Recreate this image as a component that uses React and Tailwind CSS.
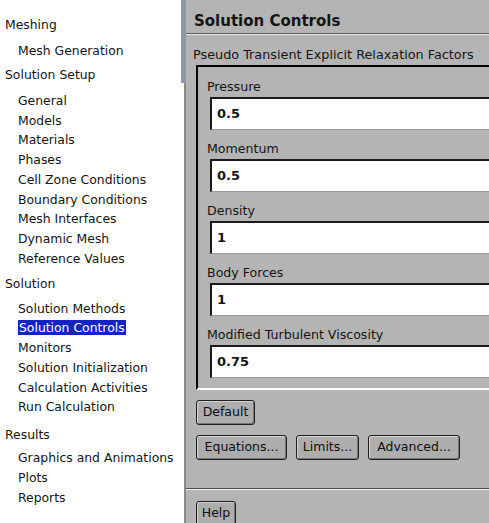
const tree = [
  { title: 'Meshing', sp: 'mb-[6px]', items: ['Mesh Generation'] },
  {
    title: 'Solution Setup',
    sp: 'mt-[4px] mb-[6px]',
    items: [
      'General',
      'Models',
      'Materials',
      'Phases',
      'Cell Zone Conditions',
      'Boundary Conditions',
      'Mesh Interfaces',
      'Dynamic Mesh',
      'Reference Values',
    ],
  },
  {
    title: 'Solution',
    sp: 'mt-[5px] mb-[5px]',
    items: [
      'Solution Methods',
      'Solution Controls',
      'Monitors',
      'Solution Initialization',
      'Calculation Activities',
      'Run Calculation',
    ],
  },
  { title: 'Results', sp: 'mt-[8px] mb-[3px]', items: ['Graphics and Animations', 'Plots', 'Reports'] },
];

const fields = [
  { label: 'Pressure', value: '0.5' },
  { label: 'Momentum', value: '0.5' },
  { label: 'Density', value: '1' },
  { label: 'Body Forces', value: '1' },
  { label: 'Modified Turbulent Viscosity', value: '0.75' },
];

function Btn({ children, w }) {
  return (
    <button
      className={`h-[25px] ${w} rounded-[3px] border-[1.5px] border-[#1e1e1e] bg-[#adadad] text-[12.5px] leading-none text-[#0e0e0e] shadow-[inset_1px_1px_0_#d2d2d2,inset_-1px_-1px_0_#767676]`}
    >
      {children}
    </button>
  );
}

export default function App() {
  return (
    <div className="flex h-[523px] w-[489px] overflow-hidden bg-white font-['DejaVu_Sans',sans-serif] text-[#141414]">
      {/* arbre de navigation */}
      <div className="w-[181px] shrink-0 bg-white pt-[15px] text-[12.4px]">
        {tree.map((sec) => (
          <div key={sec.title}>
            <div className={`h-[20px] whitespace-nowrap pl-[5px] leading-[20px] ${sec.sp}`}>
              {sec.title}
            </div>
            {sec.items.map((it) => (
              <div key={it} className="h-[19.75px] whitespace-nowrap pl-[18px] leading-[19.75px]">
                {it === 'Solution Controls' ? (
                  <span className="bg-[#1424c4] px-px text-white">{it}</span>
                ) : (
                  it
                )}
              </div>
            ))}
          </div>
        ))}
      </div>

      {/* séparateur */}
      <div className="flex w-[5px] shrink-0 flex-col">
        <div className="h-[83px] bg-[#8d96a8]" />
        <div className="flex-1 border-r-2 border-[#8a8a8a] bg-white" />
      </div>

      {/* panneau */}
      <div className="flex-1 overflow-hidden bg-[#b4b4b4]">
        <div className="h-[33px] whitespace-nowrap pl-[8px] pt-[11px] text-[15px] font-bold leading-[20px]">
          Solution Controls
        </div>
        <div className="h-px bg-[#5e5e5e]" />
        <div className="h-px bg-[#e8e8e8]" />

        <div className="mt-[12px] h-[16px] whitespace-nowrap pl-[7px] text-[12.8px] leading-[16px]">
          Pseudo Transient Explicit Relaxation Factors
        </div>

        <div className="ml-[10px] mt-[2px] w-[330px] border-b-2 border-l-2 border-t-2 border-b-white border-l-black border-t-black pb-[10px] pl-[9px] pt-[12px]">
          {fields.map((f, i) => (
            <div key={f.label} className={i ? 'mt-[11px]' : ''}>
              <div className="h-[16px] whitespace-nowrap text-[12.6px] leading-[16px]">{f.label}</div>
              <div className="ml-[3px] mt-[2px] flex h-[33px] items-center border-b border-l-2 border-t-2 border-b-[#9a9a9a] border-l-[#1a1a1a] border-t-[#1a1a1a] bg-white pl-[5px] text-[13px] font-bold">
                {f.value}
              </div>
            </div>
          ))}
        </div>

        <div className="ml-[10px] mt-[9px]">
          <Btn w="w-[59px]">Default</Btn>
        </div>
        <div className="ml-[10px] mt-[10px] flex gap-[9px]">
          <Btn w="w-[91px]">Equations...</Btn>
          <Btn w="w-[63px]">Limits...</Btn>
          <Btn w="w-[92px]">Advanced...</Btn>
        </div>

        <div className="mt-[28px] h-px bg-[#4a4a4a]" />
        <div className="h-px bg-[#efefef]" />

        <div className="ml-[10px] mt-[10px]">
          <Btn w="w-[40px]">Help</Btn>
        </div>
      </div>
    </div>
  );
}
